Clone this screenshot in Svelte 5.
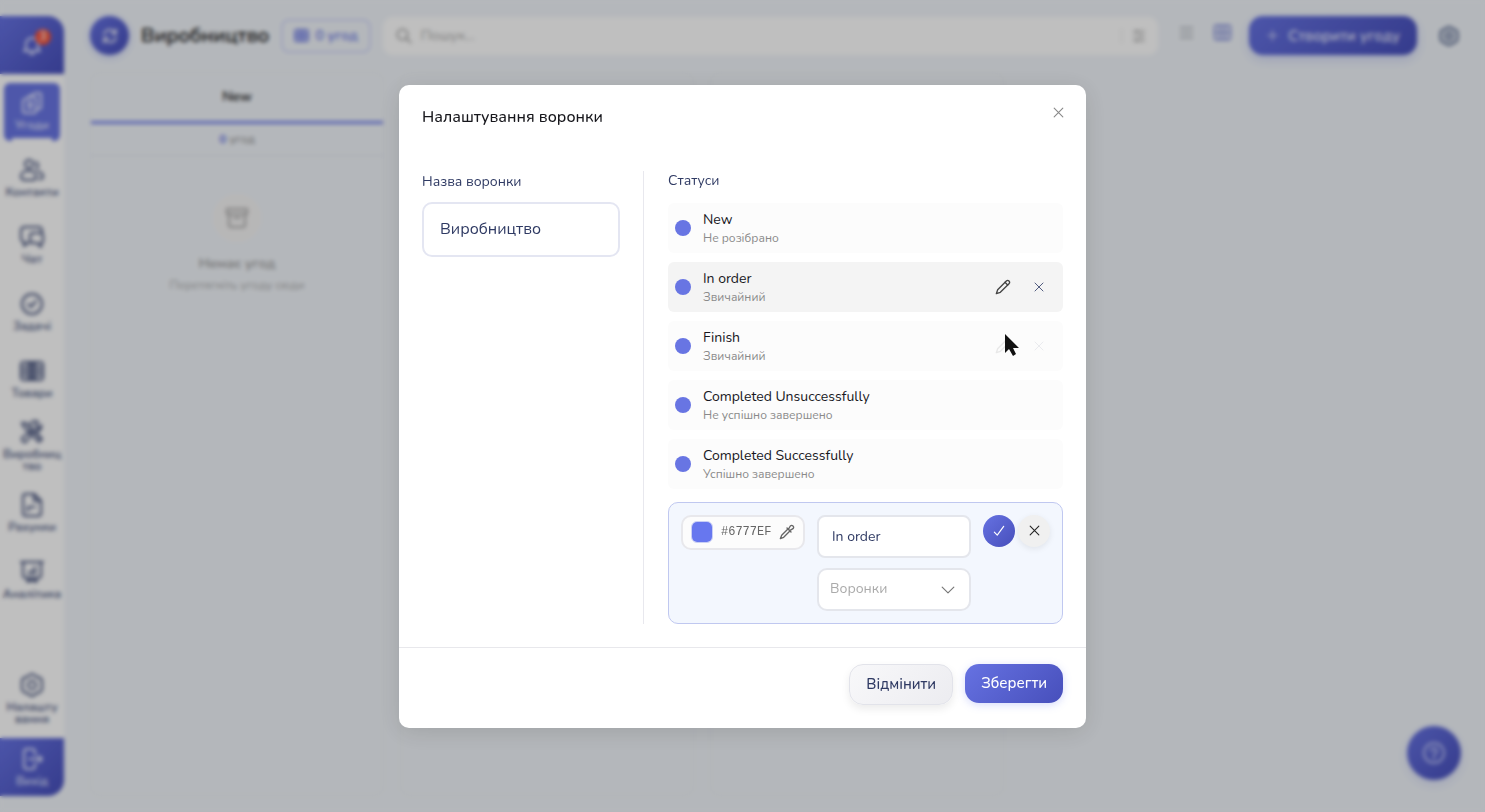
<script lang="ts">
	type Status = { name: string; kind: string; state?: 'active' | 'fading' };

	const icons: Record<string, string[]> = {
		bell: ['M6 16V11a6 6 0 0 1 12 0v5l2 2H4z', 'M10 21h4'],
		deals: ['M8 6 15 2h4q2 0 2 2v12q0 2-2 2h-2', 'M5 8 10 6h4q2 0 2 2v12q0 2-2 2H5q-2 0-2-2V10q0-1 2-2z', 'M8 12h4M8 16h4M10 10v8'],
		contacts: ['M9 2a4 4 0 1 1 0 8 4 4 0 0 1 0-8z', 'M1 18c0-7 15-7 15 0q0 4-3 4H5q-4 0-4-4z', 'M16 4a4 4 0 0 1 0 7M18 14c4 0 5 3 5 5q0 2-4 2'],
		chat: ['M9 18H7l-3 3v-4q-3-1-3-4V6q0-4 4-4h13q4 0 4 4v2', 'M13 8h7q3 0 3 3v5q0 2-2 2v4l-4-4h-4q-3 0-3-3v-4q0-3 3-3z'],
		tasks: ['M12 2a10 10 0 1 1 0 20 10 10 0 0 1 0-20z', 'm8 12 3 3 5-6'],
		goods: ['M4 3h16q3 0 3 3v12q0 3-3 3H4q-3 0-3-3V6q0-3 3-3z', 'M8 4v16M11 4v16M13 4v16M16 4v16M3 8h3M3 12h3M18 8h3M18 12h3M3 16h3M18 16h3'],
		tools: ['m2 3 4 0 16 16-3 3L4 7z', 'M21 5a5 5 0 0 1-7 6L6 22q-4 1-4-4l10-8a5 5 0 0 1 6-8l-3 4 3 3z', 'm16 14 5 5'],
		bills: ['M5 1h9l7 7v12q0 3-3 3H6q-3 0-3-3V4q0-3 2-3z', 'M14 1v7h7z', 'M8 18v-4h7'],
		stats: ['M1 2h22M3 2v13q0 3 3 3h12q3 0 3-3V2', 'M9 14v-2M12 14v-4M15 14V7M8 22l2-4M16 22l-2-4M7 21h10'],
		gear: ['M12 1q2 0 3 2l5 2q2 1 2 3v8q0 2-2 3l-5 2q-1 2-3 2t-3-2l-5-2q-2-1-2-3V8q0-2 2-3l5-2q1-2 3-2z', 'M12 8a4 4 0 1 1 0 8 4 4 0 0 1 0-8z'],
		exit: ['M15 8V5q0-3-3-3H7Q4 2 4 5v14q0 3 3 3h5q3 0 3-3v-3', 'M9 12h13M19 9l3 3-3 3'],
		refresh: ['M4 10a8 8 0 0 1 15-2M20 14a8 8 0 0 1-15 2', 'M20 3v6h-6M4 21v-6h6'],
		table: ['M4 3h16q2 0 2 2v14q0 2-2 2H4q-2 0-2-2V5q0-2 2-2z', 'M2 12h20M9 4v16M15 4v16'],
		search: ['M10 3a7 7 0 1 1 0 14 7 7 0 0 1 0-14z', 'm15 15 6 6'],
		filter: ['M3 4h18M3 12h18M3 20h18', 'M8 2v4M16 10v4M8 18v4'],
		list: ['M2 4h20M2 12h20M2 20h20'],
		plus: ['M12 3v18M3 12h18'],
		box: ['M2 3h20v5H2z', 'M4 8v11q0 2 2 2h12q2 0 2-2V8', 'M9 12h6'],
		help: ['M12 2a10 10 0 1 1 0 20 10 10 0 0 1 0-20z', 'M9 10a3 3 0 1 1 4 3q-1 0-1 2M12 17v1'],
		close: ['M4 4 20 20M20 4 4 20'],
		pencil: ['M2 22l2-6L17 3q2-2 4 0t0 4L8 20z', 'M15 5l4 4'],
		check: ['m4 14 5 5L20 4'],
		dropper: ['M12 6l6 6M14 8l3-5q2-2 4 0t0 4l-5 3', 'M13 8 4 17l-2 5 5-2 9-9'],
		chevron: ['m2 7 10 10L22 7'],
	};

	const nav = [
		{ icon: 'deals', label: 'Угоди' },
		{ icon: 'contacts', label: 'Контакти' },
		{ icon: 'chat', label: 'Чат' },
		{ icon: 'tasks', label: 'Задачі' },
		{ icon: 'goods', label: 'Товари' },
		{ icon: 'tools', label: 'Виробниц\nтво' },
		{ icon: 'bills', label: 'Рахунки' },
		{ icon: 'stats', label: 'Аналітика' },
	];

	const statuses: Status[] = [
		{ name: 'New', kind: 'Не розібрано' },
		{ name: 'In order', kind: 'Звичайний', state: 'active' },
		{ name: 'Finish', kind: 'Звичайний', state: 'fading' },
		{ name: 'Completed Unsuccessfully', kind: 'Не успішно завершено' },
		{ name: 'Completed Successfully', kind: 'Успішно завершено' },
	];

	let funnelName = $state('Виробництво');
	let statusName = $state('In order');
	let color = $state('#6777ef');
	let kind = $state('');
</script>

{#snippet icon(name: string, size = 24, weight = 2)}
	<svg width={size} height={size} viewBox="0 0 24 24" fill="none" stroke="currentColor" stroke-width={weight} stroke-linecap="round" stroke-linejoin="round" aria-hidden="true">
		{#each icons[name] as d}<path {d} />{/each}
	</svg>
{/snippet}

<div class="page">
	<aside class="sidebar">
		<button class="bell" aria-label="Сповіщення">
			<span class="bell-icon">{@render icon('bell', 24)}<span class="count">3</span></span>
		</button>
		<nav>
			{#each nav as item, i}
				<a href="#{item.icon}" class="nav-item" class:current={i === 0}>
					{@render icon(item.icon)}
					<span>{item.label}</span>
				</a>
			{/each}
			<a href="#settings" class="nav-item bottom">
				{@render icon('gear')}
				<span>{'Налашту\nвання'}</span>
			</a>
		</nav>
		<button class="exit">
			{@render icon('exit')}
			<span>Вихід</span>
		</button>
	</aside>

	<main>
		<header class="topbar">
			<button class="refresh" aria-label="Оновити">{@render icon('refresh', 18)}</button>
			<h1>Виробництво</h1>
			<span class="badge">{@render icon('table', 15, 3)} 0 угод</span>
			<label class="search">
				{@render icon('search', 18)}
				<input type="search" placeholder="Пошук..." aria-label="Пошук">
				<span class="filter">{@render icon('filter', 14)}</span>
			</label>
			<div class="views">
				<button aria-label="Список">{@render icon('list', 15)}</button>
				<button class="on" aria-label="Дошка">{@render icon('table', 19)}</button>
			</div>
			<button class="create">{@render icon('plus', 13)} Створити угоду</button>
			<button class="config" aria-label="Налаштування дошки">{@render icon('gear', 20, 3)}</button>
		</header>

		<div class="board">
			<section class="column">
				<h2>New</h2>
				<p class="total"><b>0</b> угод</p>
				<div class="empty">
					<span class="empty-icon">{@render icon('box')}</span>
					<strong>Немає угод</strong>
					<span>Перетягніть угоду сюди</span>
				</div>
			</section>
			<section class="column"></section>
			<section class="column"></section>
		</div>
	</main>
	<button class="help" aria-label="Допомога">{@render icon('help')}</button>
</div>

<div class="overlay">
	<div class="modal" role="dialog" aria-modal="true" aria-labelledby="modal-title">
		<header class="modal-head">
			<h2 id="modal-title">Налаштування воронки</h2>
			<button aria-label="Закрити">{@render icon('close', 13)}</button>
		</header>

		<div class="modal-body">
			<div class="name-col">
				<label for="funnel">Назва воронки</label>
				<input id="funnel" type="text" bind:value={funnelName}>
			</div>
			<div class="status-col">
				<h3>Статуси</h3>
				<ul>
					{#each statuses as status}
						<li class={status.state}>
							<span class="dot"></span>
							<div class="info">
								<span class="name">{status.name}</span>
								<span class="kind">{status.kind}</span>
							</div>
							{#if status.state}
								<div class="actions">
									<button aria-label="Редагувати">{@render icon('pencil', 16)}</button>
									<button aria-label="Видалити">{@render icon('close', 12)}</button>
								</div>
							{/if}
							{#if status.state === 'fading'}
								<svg class="pointer" width="16" height="24" viewBox="0 0 16 24" aria-hidden="true">
									<path d="M1 1v19l4-4 4 7 3-2-3-6h6z" fill="#111" />
								</svg>
							{/if}
						</li>
					{/each}
				</ul>
				<form class="editor" onsubmit={(e) => e.preventDefault()}>
					<label class="color">
						<input type="color" bind:value={color} aria-label="Колір">
						<span>{color.toUpperCase()}</span>
						{@render icon('dropper', 16)}
					</label>
					<div class="fields">
						<input type="text" bind:value={statusName} aria-label="Назва статусу">
						<div class="select">
							<select bind:value={kind} aria-label="Тип статусу">
								<option value="">Воронки</option>
							</select>
							{@render icon('chevron', 14)}
						</div>
					</div>
					<div class="confirm">
						<button class="ok" aria-label="Підтвердити">{@render icon('check', 14)}</button>
						<button type="button" class="no" aria-label="Скасувати">{@render icon('close', 13)}</button>
					</div>
				</form>
			</div>
		</div>

		<footer>
			<button class="cancel">Відмінити</button>
			<button class="save">Зберегти</button>
		</footer>
	</div>
</div>

<style>
	:global(body) {
		margin: 0;
	}
	.page,
	.overlay {
		--accent: #6875e3;
		--grad: linear-gradient(135deg, #6672e2, #474fbb);
		--navy: #2f3a63;
		font-family: Nunito, Lato, sans-serif;
		font-size: 14px;
		line-height: 18px;
		box-sizing: border-box;
	}
	.page *,
	.overlay * {
		box-sizing: border-box;
	}
	h1, h2, h3, p, ul {
		margin: 0;
		padding: 0;
	}
	button {
		border: 0;
		padding: 0;
		background: none;
		font: inherit;
		color: inherit;
		cursor: pointer;
		display: flex;
		align-items: center;
		justify-content: center;
	}
	input, select {
		font: inherit;
		color: inherit;
		min-width: 0;
		outline: 0;
	}
	svg {
		flex: none;
		display: block;
	}

	.page {
		display: flex;
		gap: 26px;
		min-height: 100vh;
		padding: 16px 26px 16px 0;
		background: #f1f5fa;
	}
	.sidebar {
		width: 64px;
		flex: none;
		display: flex;
		flex-direction: column;
		border-radius: 0 16px 16px 0;
		overflow: hidden;
		background: #fff;
		color: #46527c;
		font-size: 12px;
		font-weight: 600;
		line-height: 12px;
	}
	.bell, .exit {
		flex: none;
		height: 58px;
		background: var(--grad);
		color: #dfe3ff;
	}
	.bell-icon {
		position: relative;
	}
	.count {
		position: absolute;
		top: -4px;
		right: -7px;
		width: 16px;
		height: 16px;
		border-radius: 50%;
		background: #f4543c;
		color: #fff;
		font-size: 11px;
		line-height: 16px;
	}
	.exit {
		flex-direction: column;
		gap: 4px;
	}
	nav {
		flex: 1;
		display: flex;
		flex-direction: column;
		gap: 9px;
		padding: 9px 4px;
	}
	.nav-item {
		height: 58px;
		display: flex;
		flex-direction: column;
		align-items: center;
		justify-content: center;
		gap: 4px;
		padding-bottom: 2px;
		color: inherit;
		text-decoration: none;
		text-align: center;
		white-space: pre;
	}
	.nav-item.current {
		border-radius: 6px;
		background: linear-gradient(#fff, #fff) center bottom / 40px 3px no-repeat, var(--accent);
		color: #e4e7ff;
	}
	.bottom {
		margin-top: auto;
	}

	main {
		flex: 1;
		min-width: 0;
		display: flex;
		flex-direction: column;
		gap: 17px;
	}
	.topbar {
		display: flex;
		align-items: center;
		gap: 12px;
		height: 39px;
	}
	.refresh {
		width: 39px;
		height: 39px;
		border-radius: 50%;
		background: var(--grad);
		color: #fff;
		box-shadow: 0 2px 8px #6777ef55;
	}
	h1 {
		font-size: 20px;
		font-weight: 600;
		line-height: 28px;
		color: #111;
	}
	.badge {
		display: flex;
		align-items: center;
		gap: 6px;
		height: 34px;
		padding: 0 11px;
		border: 2px solid #d3d8fa;
		border-radius: 8px;
		color: var(--accent);
		font-weight: 600;
		white-space: nowrap;
	}
	.search {
		flex: 1;
		display: flex;
		align-items: center;
		gap: 6px;
		height: 38px;
		padding: 0 12px;
		border-radius: 10px;
		background: #fff;
		color: #999;
	}
	.search input {
		flex: 1;
		border: 0;
		background: none;
	}
	.search input::placeholder {
		color: #aaa;
	}
	.filter {
		padding-left: 10px;
		border-left: 1px solid #e8e8e8;
	}
	.views {
		display: flex;
		gap: 19px;
		padding: 0 5px 6px 9px;
		color: #9a9fa8;
	}
	.views .on {
		color: #7b86d8;
	}
	.create {
		gap: 9px;
		height: 39px;
		padding: 0 17px;
		border-radius: 14px;
		background: var(--grad);
		box-shadow: 0 4px 12px #6777ef44;
		color: #e4e7ff;
		font-size: 15px;
		font-weight: 600;
		white-space: nowrap;
	}
	.config {
		margin-left: 10px;
		color: #68779a;
	}
	.board {
		flex: 1;
		display: grid;
		grid-template-columns: repeat(auto-fill, 294px);
		gap: 16px;
	}
	.column {
		border: 1px solid #e8ecf2;
		border-radius: 10px;
		text-align: center;
	}
	.column h2 {
		padding: 15px 0;
		border-bottom: 3px solid #7b88ec;
		font-size: 14px;
		font-weight: 600;
		line-height: 18px;
		color: #111;
	}
	.total {
		padding: 6px 0 7px;
		border-bottom: 1px solid #e0e4ea;
		font-size: 12px;
		color: #888;
	}
	.total b {
		color: var(--accent);
	}
	.empty {
		display: flex;
		flex-direction: column;
		align-items: center;
		gap: 3px;
		padding-top: 38px;
		font-size: 12px;
		color: #aaa;
	}
	.empty strong {
		font-size: 14px;
		font-weight: 600;
		color: #999;
	}
	.empty-icon {
		display: grid;
		place-items: center;
		width: 48px;
		height: 48px;
		margin-bottom: 10px;
		border-radius: 50%;
		background: #f5f4f4;
	}
	.help {
		position: fixed;
		right: 24px;
		bottom: 32px;
		width: 54px;
		height: 54px;
		border-radius: 50%;
		background: var(--grad);
		box-shadow: 0 4px 12px #6777ef33;
		color: #b9c0f5;
	}

	.overlay {
		position: fixed;
		inset: 0;
		display: grid;
		place-items: center;
		background: rgba(0, 0, 0, 0.25);
		backdrop-filter: blur(2px);
	}
	.modal {
		width: 100%;
		max-width: 687px;
		border-radius: 10px;
		background: #fff;
		box-shadow: 0 4px 24px rgba(0, 0, 0, 0.12);
		color: var(--navy);
	}
	.modal-head {
		display: flex;
		justify-content: space-between;
		align-items: flex-start;
		padding: 20px 20px 42px 23px;
	}
	.modal-head h2 {
		font-size: 16px;
		font-weight: 500;
		line-height: 24px;
		color: #17171c;
	}
	.modal-head button {
		width: 16px;
		height: 16px;
		color: #888;
	}
	.modal-body {
		display: grid;
		grid-template-columns: 198px 1fr;
		gap: 23px;
		padding: 0 23px 23px;
	}
	.name-col {
		display: flex;
		flex-direction: column;
		gap: 11px;
		padding-top: 2px;
	}
	.name-col input {
		height: 55px;
		padding: 0 16px;
		border: 2px solid #e4e6f2;
		border-radius: 10px;
		font-size: 16px;
	}
	.status-col {
		padding-left: 24px;
		border-left: 1px solid #e8e8ee;
	}
	h3 {
		font-size: 14px;
		font-weight: 400;
		line-height: 20px;
		margin-bottom: 12px;
	}
	ul {
		display: flex;
		flex-direction: column;
		gap: 9px;
		list-style: none;
	}
	li {
		position: relative;
		display: flex;
		align-items: center;
		gap: 12px;
		height: 50px;
		padding: 0 16px 0 7px;
		border-radius: 6px;
		background: #fcfcfc;
	}
	li.active {
		background: #f4f4f4;
	}
	.dot {
		width: 16px;
		height: 16px;
		border-radius: 50%;
		background: var(--accent);
	}
	.info {
		flex: 1;
		display: flex;
		flex-direction: column;
		padding-top: 2px;
	}
	.name {
		color: #17171c;
	}
	.kind {
		font-size: 12px;
		color: #8a8a8a;
	}
	.actions {
		display: flex;
		gap: 20px;
		color: #444;
	}
	.actions button {
		width: 16px;
		height: 16px;
	}
	.actions button:last-child {
		color: #525c80;
	}
	.fading .actions {
		opacity: 0.1;
	}
	.pointer {
		position: absolute;
		right: 43px;
		top: 12px;
	}
	.editor {
		display: grid;
		grid-template-columns: 124px 1fr auto;
		align-items: start;
		gap: 12px;
		margin-top: 13px;
		padding: 12px;
		border: 1px solid #c0c8f0;
		border-radius: 10px;
		background: #f3f7fe;
	}
	.color {
		display: flex;
		align-items: center;
		gap: 8px;
		height: 35px;
		padding: 0 8px;
		border: 2px solid #e8e8ec;
		border-radius: 10px;
		background: #fcfcfc;
		font-family: "Liberation Mono", monospace;
		font-size: 12px;
		color: #666;
	}
	.color span {
		flex: 1;
	}
	.color input {
		appearance: none;
		flex: none;
		width: 22px;
		height: 22px;
		padding: 0;
		border: 1px solid #c9cff5;
		border-radius: 6px;
		background: none;
		overflow: hidden;
	}
	.color input::-webkit-color-swatch-wrapper {
		padding: 0;
	}
	.color input::-webkit-color-swatch {
		border: 0;
	}
	.fields {
		display: grid;
		gap: 10px;
	}
	.fields input,
	.fields select {
		display: block;
		width: 100%;
		height: 43px;
		padding: 0 13px;
		border: 2px solid #e4e6ec;
		border-radius: 8px;
		background: #fff;
	}
	.select {
		position: relative;
	}
	.fields select {
		appearance: none;
		padding: 0 11px;
		border-radius: 10px;
		color: #aaa;
	}
	.select svg {
		position: absolute;
		right: 16px;
		top: 15px;
		color: #777;
		pointer-events: none;
	}
	.confirm {
		display: flex;
		gap: 3px;
	}
	.confirm button {
		width: 32px;
		height: 32px;
		border-radius: 50%;
	}
	.ok {
		background: var(--grad);
		color: #fff;
	}
	.confirm .no {
		background: #f0f0f0;
		box-shadow: 0 2px 6px rgba(0, 0, 0, 0.08);
		color: #222;
	}
	footer {
		display: flex;
		justify-content: flex-end;
		align-items: flex-start;
		gap: 12px;
		padding: 16px 23px 23px;
		border-top: 1px solid #e8e8ec;
		font-size: 15px;
		font-weight: 500;
	}
	footer button {
		padding: 0 16px;
		border-radius: 14px;
	}
	.cancel {
		height: 41px;
		border: 1px solid #e2e3ea;
		background: linear-gradient(135deg, #f8f8fa, #ececf0);
		box-shadow: 0 4px 8px rgba(0, 0, 0, 0.08);
	}
	.save {
		height: 39px;
		background: var(--grad);
		box-shadow: 0 2px 8px #6777ef44;
		color: #fff;
	}
</style>
